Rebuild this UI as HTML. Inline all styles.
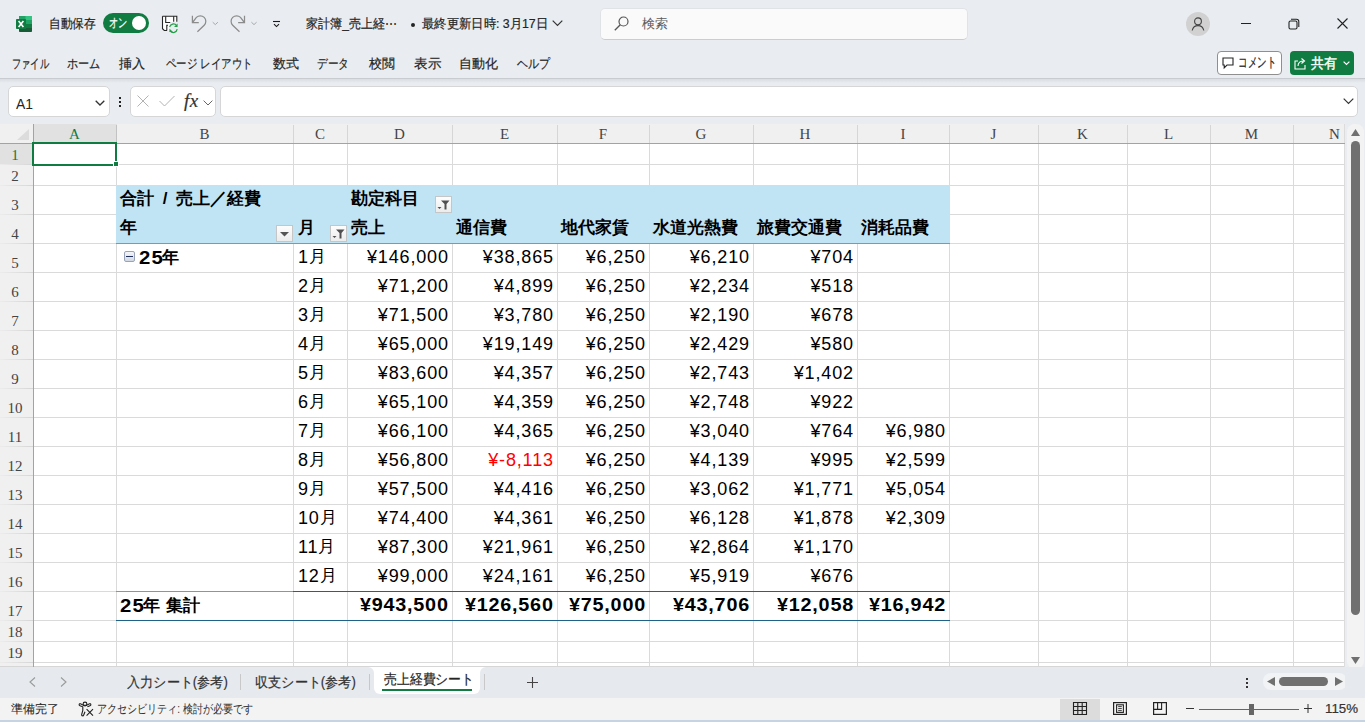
<!DOCTYPE html><html><head><meta charset="utf-8"><style>
*{margin:0;padding:0;box-sizing:border-box}
html,body{width:1365px;height:722px;overflow:hidden;background:#e9edf1;font-family:"Liberation Sans",sans-serif;color:#242424}
div{position:absolute}
.t{white-space:nowrap;line-height:16px;font-size:13px;-webkit-text-stroke:0.2px currentColor}
.c{white-space:nowrap;line-height:17px;font-size:17px;color:#000}
.r{text-align:right}
.b{font-weight:bold}
.n{letter-spacing:0.85px;font-size:18px}
.bn{font-size:18.5px;letter-spacing:1px;display:inline-block;transform:scaleX(1.1);transform-origin:0 0;margin-right:0.5px;position:relative;top:1px}
.bt{font-size:18px;letter-spacing:0.7px;transform:scaleX(1.1);transform-origin:100% 0}
.hd{white-space:nowrap;font-family:"Liberation Serif",serif;font-size:15px;line-height:15px;color:#4a4a4a}
svg{position:absolute;overflow:visible}
</style></head><body>
<svg style="left:16px;top:16px" width="16" height="16" viewBox="0 0 16 16">
<rect x="3" y="0" width="13" height="16" rx="0.8" fill="#185c37"/>
<rect x="3" y="0" width="13" height="12" fill="#107c41"/>
<rect x="3" y="0" width="13" height="8" fill="#21a366"/>
<rect x="3" y="0" width="13" height="4" fill="#21a366"/>
<rect x="9.5" y="0" width="6.5" height="4" fill="#33c481"/>
<rect x="0" y="3" width="10" height="10" rx="0.8" fill="#107c41"/>
<path d="M2.6 5 L7.4 11 M7.4 5 L2.6 11" stroke="#fff" stroke-width="1.6"/>
</svg>
<div id="x1" class="t" style="left:49px;top:16px;font-size:13px;color:#242424;transform:scaleX(0.9038);transform-origin:0 0;--tw:47">自動保存</div>
<div style="left:103px;top:13px;width:46px;height:20px;background:#107c41;border-radius:10px"></div>
<div id="x2" class="t" style="left:109px;top:15px;font-size:13px;color:#fff;transform:scaleX(0.7115);transform-origin:0 0;--tw:18.5">オン</div>
<div style="left:132px;top:16px;width:14px;height:14px;background:#fff;border-radius:7px"></div>
<svg style="left:158px;top:12px" width="26" height="24" viewBox="0 0 26 24">
<path d="M4.5 4.3 H18.8 V10 H12 V18.5 H6.5 L4.5 16.7 Z" fill="#fff"/>
<path d="M4.5 4.3 H18.8 V9.8 M4.5 4.3 V16.7 L6.3 18.5 H9" fill="none" stroke="#262626" stroke-width="1.1"/>
<path d="M7.7 4.3 V10.5 H12.2 M15.7 4.3 V9.8 M8.8 18.5 V13.3 H10" fill="none" stroke="#262626" stroke-width="1.1"/>
<path d="M11.6 15.2 A3.9 3.9 0 0 1 18.6 13.6 M19.2 17.2 A3.9 3.9 0 0 1 12.2 18.9" fill="none" stroke="#22a045" stroke-width="1.2"/>
<path d="M19.6 11.4 V15 H16 Z M11.4 16.4 V20 H15 Z" fill="#22a045"/>
</svg>
<svg style="left:186px;top:10px" width="76" height="26" viewBox="0 0 76 26">
<g fill="none" stroke="#8c8c8c" stroke-width="1.25">
<path d="M6.4 5.8 V12.5 H12.8"/>
<path d="M6.9 12 L10.4 7.4 A5.5 5.5 0 0 1 18.2 15.2 L11.4 21.8"/>
<path d="M58.5 5.8 V12.5 H52.1"/>
<path d="M58 12 L54.5 7.4 A5.5 5.5 0 0 0 46.7 15.2 L53.5 21.8"/>
</g>
<path d="M26.7 12.2 L29.3 14.6 L31.9 12.2 M65.4 12.2 L68 14.6 L70.6 12.2" fill="none" stroke="#a8a8a8" stroke-width="1"/>
</svg>
<svg style="left:272px;top:20px" width="9" height="8" viewBox="0 0 9 8"><path d="M1 1.5 H8" stroke="#1a1a1a" stroke-width="1.1"/><path d="M2 4.2 L4.5 6.6 L7 4.2" fill="none" stroke="#1a1a1a" stroke-width="1.1"/></svg>
<div id="x3" class="t" style="left:306px;top:16px;font-size:13px;color:#242424;transform:scaleX(0.9264);transform-origin:0 0;--tw:91">家計簿_売上経⋯</div>
<div style="left:411px;top:23px;width:4px;height:4px;background:#242424;border-radius:2px"></div>
<div id="x4" class="t" style="left:422px;top:16px;font-size:13px;color:#242424;transform:scaleX(0.9479);transform-origin:0 0;--tw:126">最終更新日時: 3月17日</div>
<svg style="left:552px;top:20px" width="11" height="7" viewBox="0 0 11 7"><path d="M0.7 0.7 L5.5 5.5 L10.3 0.7" fill="none" stroke="#333" stroke-width="1.2"/></svg>
<div style="left:600px;top:8px;width:368px;height:32px;background:#fafafa;border:1px solid #e0e3e6;border-bottom-color:#c9ccd0;border-radius:5px"></div>
<svg style="left:614px;top:16px" width="15" height="15" viewBox="0 0 15 15"><circle cx="9.5" cy="5.5" r="4.5" fill="none" stroke="#555" stroke-width="1.2"/><path d="M6.3 8.7 L0.8 14.2" stroke="#555" stroke-width="1.3"/></svg>
<div id="x5" class="t" style="left:642px;top:16px;font-size:13px;color:#5c5c5c;-webkit-text-stroke:0.05px;transform:scaleX(1.0000);transform-origin:0 0;--tw:26">検索</div>
<div style="left:1186px;top:12px;width:24px;height:24px;background:#d1d1d1;border-radius:12px"></div>
<svg style="left:1190px;top:16px" width="16" height="16" viewBox="0 0 16 16"><circle cx="8" cy="5.3" r="3.4" fill="none" stroke="#424242" stroke-width="1.1"/><path d="M2.2 14.5 C3 11 5.3 9.6 8 9.6 C10.7 9.6 13 11 13.8 14.5" fill="none" stroke="#424242" stroke-width="1.1"/></svg>
<div style="left:1241px;top:23px;width:10px;height:1px;background:#222"></div>
<svg style="left:1288px;top:18px" width="12" height="12" viewBox="0 0 12 12"><rect x="1" y="3" width="8" height="8" rx="1.5" fill="none" stroke="#222" stroke-width="1.1"/><path d="M3 1.2 H8.5 C9.8 1.2 10.8 2.2 10.8 3.5 V9" fill="none" stroke="#222" stroke-width="1.1"/></svg>
<svg style="left:1337px;top:18px" width="11" height="11" viewBox="0 0 11 11"><path d="M0.5 0.5 L10.5 10.5 M10.5 0.5 L0.5 10.5" stroke="#222" stroke-width="1.1"/></svg>
<div id="x6" class="t" style="left:12px;top:56px;font-size:13px;color:#242424;transform:scaleX(0.7115);transform-origin:0 0;--tw:37">ファイル</div>
<div id="x7" class="t" style="left:66.5px;top:56px;font-size:13px;color:#242424;transform:scaleX(0.8590);transform-origin:0 0;--tw:33.5">ホーム</div>
<div id="x8" class="t" style="left:119px;top:56px;font-size:13px;color:#242424;transform:scaleX(1.0000);transform-origin:0 0;--tw:26">挿入</div>
<div id="x9" class="t" style="left:165.5px;top:56px;font-size:13px;color:#242424;transform:scaleX(0.8037);transform-origin:0 0;--tw:86.5">ページ レイアウト</div>
<div id="x10" class="t" style="left:273px;top:56px;font-size:13px;color:#242424;transform:scaleX(1.0000);transform-origin:0 0;--tw:26">数式</div>
<div id="x11" class="t" style="left:317px;top:56px;font-size:13px;color:#242424;transform:scaleX(0.8205);transform-origin:0 0;--tw:32">データ</div>
<div id="x12" class="t" style="left:369px;top:56px;font-size:13px;color:#242424;transform:scaleX(1.0000);transform-origin:0 0;--tw:26">校閲</div>
<div id="x13" class="t" style="left:413.5px;top:56px;font-size:13px;color:#242424;transform:scaleX(1.0385);transform-origin:0 0;--tw:27">表示</div>
<div id="x14" class="t" style="left:459px;top:56px;font-size:13px;color:#242424;transform:scaleX(1.0000);transform-origin:0 0;--tw:39">自動化</div>
<div id="x15" class="t" style="left:516.5px;top:56px;font-size:13px;color:#242424;transform:scaleX(0.8462);transform-origin:0 0;--tw:33">ヘルプ</div>
<div style="left:1217px;top:51px;width:65px;height:24px;background:#fff;border:1px solid #8f8f8f;border-radius:4px"></div>
<svg style="left:1222px;top:57px" width="12" height="12" viewBox="0 0 12 12"><path d="M1 1 H11 V8 H5 L2.2 10.8 V8 H1 Z" fill="none" stroke="#242424" stroke-width="1.1"/></svg>
<div id="x16" class="t" style="left:1238px;top:54px;font-size:14px;color:#1a1a1a;transform:scaleX(0.6786);transform-origin:0 0;--tw:38">コメント</div>
<div style="left:1290px;top:51px;width:64px;height:24px;background:#107c41;border-radius:4px"></div>
<svg style="left:1294px;top:57px" width="13" height="13" viewBox="0 0 13 13"><path d="M4 4 H1 V12 H11 V8" fill="none" stroke="#fff" stroke-width="1.1"/><path d="M4 9 C4 5.5 6.5 4 9.5 4 M7.5 1.5 L10.5 4 L7.5 6.5" fill="none" stroke="#fff" stroke-width="1.1"/></svg>
<div id="x17" class="t" style="left:1311px;top:56px;font-size:13.5px;color:#fff;-webkit-text-stroke:0.4px #fff;transform:scaleX(0.9286);transform-origin:0 0;--tw:26">共有</div>
<svg style="left:1343px;top:61px" width="7" height="5" viewBox="0 0 7 5"><path d="M0.6 0.6 L3.5 3.5 L6.4 0.6" fill="none" stroke="#fff" stroke-width="1.2"/></svg>
<div style="left:0px;top:78px;width:1365px;height:1px;background:#c8ccd0"></div>
<div style="left:0px;top:79px;width:1365px;height:4px;background:linear-gradient(#dadee2,#e9edf1)"></div>
<div style="left:8px;top:86px;width:102px;height:31px;background:#fff;border:1px solid #d6d6d6;border-radius:5px"></div>
<div id="x18" class="t" style="left:16px;top:96px;font-size:15px;line-height:15px;color:#242424;-webkit-text-stroke:0;transform:scaleX(0.9260);transform-origin:0 0;--tw:17">A1</div>
<svg style="left:95px;top:100px" width="10" height="6" viewBox="0 0 10 6"><path d="M0.7 0.7 L5 5 L9.3 0.7" fill="none" stroke="#333" stroke-width="1.3"/></svg>
<div style="left:119px;top:97px;width:2px;height:2px;background:#222"></div>
<div style="left:119px;top:101px;width:2px;height:2px;background:#222"></div>
<div style="left:119px;top:105px;width:2px;height:2px;background:#222"></div>
<div style="left:130px;top:86px;width:86px;height:31px;background:#fff;border:1px solid #d6d6d6;border-radius:5px"></div>
<svg style="left:137px;top:95px" width="12" height="12" viewBox="0 0 12 12"><path d="M0.5 0.5 L11.5 11.5 M11.5 0.5 L0.5 11.5" stroke="#b3b3b3" stroke-width="1"/></svg>
<svg style="left:159px;top:95px" width="16" height="12" viewBox="0 0 16 12"><path d="M0.5 6 L5.5 11 L15.5 1" fill="none" stroke="#b3b3b3" stroke-width="1"/></svg>
<div id="x19" class="t" style="left:184px;top:92px;font-family:'Liberation Serif',serif;font-size:19px;line-height:18px;color:#333;letter-spacing:0.5px"><i>fx</i></div>
<svg style="left:203px;top:100px" width="10" height="6" viewBox="0 0 10 6"><path d="M0.6 0.6 L5 5 L9.4 0.6" fill="none" stroke="#666" stroke-width="1"/></svg>
<div style="left:220px;top:86px;width:1138px;height:31px;background:#fff;border:1px solid #d6d6d6;border-radius:5px"></div>
<svg style="left:1343px;top:98px" width="11" height="7" viewBox="0 0 11 7"><path d="M0.7 0.7 L5.5 5.5 L10.3 0.7" fill="none" stroke="#333" stroke-width="1.2"/></svg>
<div style="left:0px;top:124px;width:1344px;height:543px;background:#fff"></div>
<div style="left:0px;top:124px;width:1344px;height:19px;background:#f0f0f0"></div>
<div style="left:0px;top:143px;width:33px;height:524px;background:#f0f0f0"></div>
<div style="left:33px;top:124px;width:84px;height:19px;background:#e1e1e1"></div>
<div style="left:0px;top:143px;width:33px;height:21px;background:#e1e1e1"></div>
<svg style="left:17px;top:129px" width="12" height="11" viewBox="0 0 12 11"><path d="M12 0 V11 H0 Z" fill="#dcdcdc"/></svg>
<div style="left:116px;top:143px;width:1px;height:524px;background:#dadada"></div>
<div style="left:293px;top:143px;width:1px;height:524px;background:#dadada"></div>
<div style="left:347px;top:143px;width:1px;height:524px;background:#dadada"></div>
<div style="left:452px;top:143px;width:1px;height:524px;background:#dadada"></div>
<div style="left:557px;top:143px;width:1px;height:524px;background:#dadada"></div>
<div style="left:649px;top:143px;width:1px;height:524px;background:#dadada"></div>
<div style="left:753px;top:143px;width:1px;height:524px;background:#dadada"></div>
<div style="left:857px;top:143px;width:1px;height:524px;background:#dadada"></div>
<div style="left:949px;top:143px;width:1px;height:524px;background:#dadada"></div>
<div style="left:1038px;top:143px;width:1px;height:524px;background:#dadada"></div>
<div style="left:1127px;top:143px;width:1px;height:524px;background:#dadada"></div>
<div style="left:1210px;top:143px;width:1px;height:524px;background:#dadada"></div>
<div style="left:1293px;top:143px;width:1px;height:524px;background:#dadada"></div>
<div style="left:33px;top:164px;width:1312px;height:1px;background:#dadada"></div>
<div style="left:33px;top:185px;width:1312px;height:1px;background:#dadada"></div>
<div style="left:33px;top:214px;width:1312px;height:1px;background:#dadada"></div>
<div style="left:33px;top:243px;width:1312px;height:1px;background:#dadada"></div>
<div style="left:33px;top:272px;width:1312px;height:1px;background:#dadada"></div>
<div style="left:33px;top:301px;width:1312px;height:1px;background:#dadada"></div>
<div style="left:33px;top:330px;width:1312px;height:1px;background:#dadada"></div>
<div style="left:33px;top:359px;width:1312px;height:1px;background:#dadada"></div>
<div style="left:33px;top:388px;width:1312px;height:1px;background:#dadada"></div>
<div style="left:33px;top:417px;width:1312px;height:1px;background:#dadada"></div>
<div style="left:33px;top:446px;width:1312px;height:1px;background:#dadada"></div>
<div style="left:33px;top:475px;width:1312px;height:1px;background:#dadada"></div>
<div style="left:33px;top:504px;width:1312px;height:1px;background:#dadada"></div>
<div style="left:33px;top:533px;width:1312px;height:1px;background:#dadada"></div>
<div style="left:33px;top:562px;width:1312px;height:1px;background:#dadada"></div>
<div style="left:33px;top:591px;width:1312px;height:1px;background:#dadada"></div>
<div style="left:33px;top:620px;width:1312px;height:1px;background:#dadada"></div>
<div style="left:33px;top:641px;width:1312px;height:1px;background:#dadada"></div>
<div style="left:33px;top:662px;width:1312px;height:1px;background:#dadada"></div>
<div style="left:0px;top:666px;width:1345px;height:1px;background:#d6d6d6"></div>
<div style="left:1344px;top:124px;width:1px;height:543px;background:#dcdcdc"></div>
<div style="left:116px;top:125px;width:1px;height:18px;background:#c2c2c2"></div>
<div style="left:293px;top:125px;width:1px;height:18px;background:#d6d6d6"></div>
<div style="left:347px;top:125px;width:1px;height:18px;background:#d6d6d6"></div>
<div style="left:452px;top:125px;width:1px;height:18px;background:#d6d6d6"></div>
<div style="left:557px;top:125px;width:1px;height:18px;background:#d6d6d6"></div>
<div style="left:649px;top:125px;width:1px;height:18px;background:#d6d6d6"></div>
<div style="left:753px;top:125px;width:1px;height:18px;background:#d6d6d6"></div>
<div style="left:857px;top:125px;width:1px;height:18px;background:#d6d6d6"></div>
<div style="left:949px;top:125px;width:1px;height:18px;background:#d6d6d6"></div>
<div style="left:1038px;top:125px;width:1px;height:18px;background:#d6d6d6"></div>
<div style="left:1127px;top:125px;width:1px;height:18px;background:#d6d6d6"></div>
<div style="left:1210px;top:125px;width:1px;height:18px;background:#d6d6d6"></div>
<div style="left:1293px;top:125px;width:1px;height:18px;background:#d6d6d6"></div>
<div style="left:0px;top:164px;width:33px;height:1px;background:linear-gradient(to right,#ececec,#d6d6d6)"></div>
<div style="left:0px;top:185px;width:33px;height:1px;background:linear-gradient(to right,#ececec,#d6d6d6)"></div>
<div style="left:0px;top:214px;width:33px;height:1px;background:linear-gradient(to right,#ececec,#d6d6d6)"></div>
<div style="left:0px;top:243px;width:33px;height:1px;background:linear-gradient(to right,#ececec,#d6d6d6)"></div>
<div style="left:0px;top:272px;width:33px;height:1px;background:linear-gradient(to right,#ececec,#d6d6d6)"></div>
<div style="left:0px;top:301px;width:33px;height:1px;background:linear-gradient(to right,#ececec,#d6d6d6)"></div>
<div style="left:0px;top:330px;width:33px;height:1px;background:linear-gradient(to right,#ececec,#d6d6d6)"></div>
<div style="left:0px;top:359px;width:33px;height:1px;background:linear-gradient(to right,#ececec,#d6d6d6)"></div>
<div style="left:0px;top:388px;width:33px;height:1px;background:linear-gradient(to right,#ececec,#d6d6d6)"></div>
<div style="left:0px;top:417px;width:33px;height:1px;background:linear-gradient(to right,#ececec,#d6d6d6)"></div>
<div style="left:0px;top:446px;width:33px;height:1px;background:linear-gradient(to right,#ececec,#d6d6d6)"></div>
<div style="left:0px;top:475px;width:33px;height:1px;background:linear-gradient(to right,#ececec,#d6d6d6)"></div>
<div style="left:0px;top:504px;width:33px;height:1px;background:linear-gradient(to right,#ececec,#d6d6d6)"></div>
<div style="left:0px;top:533px;width:33px;height:1px;background:linear-gradient(to right,#ececec,#d6d6d6)"></div>
<div style="left:0px;top:562px;width:33px;height:1px;background:linear-gradient(to right,#ececec,#d6d6d6)"></div>
<div style="left:0px;top:591px;width:33px;height:1px;background:linear-gradient(to right,#ececec,#d6d6d6)"></div>
<div style="left:0px;top:620px;width:33px;height:1px;background:linear-gradient(to right,#ececec,#d6d6d6)"></div>
<div style="left:0px;top:641px;width:33px;height:1px;background:linear-gradient(to right,#ececec,#d6d6d6)"></div>
<div style="left:0px;top:662px;width:33px;height:1px;background:linear-gradient(to right,#ececec,#d6d6d6)"></div>
<div style="left:0px;top:143px;width:1345px;height:1px;background:#a3a3a3"></div>
<div style="left:33px;top:124px;width:1px;height:543px;background:#a3a3a3"></div>
<div class="hd" style="left:33px;top:127px;width:83px;text-align:center;color:#107c41">A</div>
<div class="hd" style="left:116px;top:127px;width:177px;text-align:center;color:#444">B</div>
<div class="hd" style="left:293px;top:127px;width:54px;text-align:center;color:#444">C</div>
<div class="hd" style="left:347px;top:127px;width:105px;text-align:center;color:#444">D</div>
<div class="hd" style="left:452px;top:127px;width:105px;text-align:center;color:#444">E</div>
<div class="hd" style="left:557px;top:127px;width:92px;text-align:center;color:#444">F</div>
<div class="hd" style="left:649px;top:127px;width:104px;text-align:center;color:#444">G</div>
<div class="hd" style="left:753px;top:127px;width:104px;text-align:center;color:#444">H</div>
<div class="hd" style="left:857px;top:127px;width:92px;text-align:center;color:#444">I</div>
<div class="hd" style="left:949px;top:127px;width:89px;text-align:center;color:#444">J</div>
<div class="hd" style="left:1038px;top:127px;width:89px;text-align:center;color:#444">K</div>
<div class="hd" style="left:1127px;top:127px;width:83px;text-align:center;color:#444">L</div>
<div class="hd" style="left:1210px;top:127px;width:83px;text-align:center;color:#444">M</div>
<div class="hd" style="left:1293px;top:127px;width:83px;text-align:center;color:#444">N</div>
<div class="hd" style="left:0px;top:148px;width:30px;text-align:center;color:#107c41">1</div>
<div class="hd" style="left:0px;top:169px;width:30px;text-align:center;color:#444">2</div>
<div class="hd" style="left:0px;top:198px;width:30px;text-align:center;color:#444">3</div>
<div class="hd" style="left:0px;top:227px;width:30px;text-align:center;color:#444">4</div>
<div class="hd" style="left:0px;top:256px;width:30px;text-align:center;color:#444">5</div>
<div class="hd" style="left:0px;top:285px;width:30px;text-align:center;color:#444">6</div>
<div class="hd" style="left:0px;top:314px;width:30px;text-align:center;color:#444">7</div>
<div class="hd" style="left:0px;top:343px;width:30px;text-align:center;color:#444">8</div>
<div class="hd" style="left:0px;top:372px;width:30px;text-align:center;color:#444">9</div>
<div class="hd" style="left:0px;top:401px;width:30px;text-align:center;color:#444">10</div>
<div class="hd" style="left:0px;top:430px;width:30px;text-align:center;color:#444">11</div>
<div class="hd" style="left:0px;top:459px;width:30px;text-align:center;color:#444">12</div>
<div class="hd" style="left:0px;top:488px;width:30px;text-align:center;color:#444">13</div>
<div class="hd" style="left:0px;top:517px;width:30px;text-align:center;color:#444">14</div>
<div class="hd" style="left:0px;top:546px;width:30px;text-align:center;color:#444">15</div>
<div class="hd" style="left:0px;top:575px;width:30px;text-align:center;color:#444">16</div>
<div class="hd" style="left:0px;top:604px;width:30px;text-align:center;color:#444">17</div>
<div class="hd" style="left:0px;top:625px;width:30px;text-align:center;color:#444">18</div>
<div class="hd" style="left:0px;top:646px;width:30px;text-align:center;color:#444">19</div>
<div style="left:116px;top:185px;width:834px;height:58px;background:#c1e4f5"></div>
<div style="left:116px;top:243px;width:834px;height:1px;background:#43ade0"></div>
<div style="left:116px;top:591px;width:177px;height:1px;background:#43ade0"></div>
<div style="left:293px;top:591px;width:657px;height:1px;background:#1f6287"></div>
<div style="left:116px;top:620px;width:834px;height:1px;background:#1f6287"></div>
<div style="left:276px;top:225px;width:17px;height:17px;background:linear-gradient(#fdfdfd,#ececec);border:1px solid #c6c6c6"></div>
<svg style="left:280px;top:232px" width="9" height="5" viewBox="0 0 9 5"><path d="M0 0 H9 L4.5 4.5Z" fill="#555"/></svg>
<div style="left:330px;top:225px;width:17px;height:17px;background:linear-gradient(#fdfdfd,#ececec);border:1px solid #c6c6c6"></div>
<svg style="left:332px;top:229px" width="13" height="10" viewBox="0 0 13 10"><path d="M4 0.5 H12.5 L9.5 4 V9.5 H7.5 V4 Z" fill="#505050"/><path d="M0.5 7 H4.5 L2.5 9Z" fill="#505050"/></svg>
<div style="left:435px;top:196px;width:17px;height:17px;background:linear-gradient(#fdfdfd,#ececec);border:1px solid #c6c6c6"></div>
<svg style="left:437px;top:200px" width="13" height="10" viewBox="0 0 13 10"><path d="M4 0.5 H12.5 L9.5 4 V9.5 H7.5 V4 Z" fill="#505050"/><path d="M0.5 7 H4.5 L2.5 9Z" fill="#505050"/></svg>
<div id="x20" class="c b" style="left:120px;top:190px;word-spacing:4px">合計 / 売上／経費</div>
<div id="x21" class="c b" style="left:120px;top:219px;">年</div>
<div id="x22" class="c b" style="left:298px;top:219px;">月</div>
<div id="x23" class="c b" style="left:351px;top:190px;">勘定科目</div>
<div id="x24" class="c b" style="left:351px;top:219px;">売上</div>
<div id="x25" class="c b" style="left:456px;top:219px;">通信費</div>
<div id="x26" class="c b" style="left:561px;top:219px;">地代家賃</div>
<div id="x27" class="c b" style="left:653px;top:219px;">水道光熱費</div>
<div id="x28" class="c b" style="left:757px;top:219px;">旅費交通費</div>
<div id="x29" class="c b" style="left:861px;top:219px;">消耗品費</div>
<div style="left:124px;top:251px;width:11px;height:11px;border:1px solid #9aa3b5;border-radius:2px;background:linear-gradient(#f4f6fa,#d3d9e4)"></div>
<div style="left:126px;top:256px;width:7px;height:1px;background:#1f2f5a"></div>
<div class="c b" style="left:139px;top:248px"><span class="bn">25</span>年</div>
<div class="c" style="left:298px;top:248px"><span class="n" style="position:relative;top:1px">1</span>月</div>
<div class="c n" style="right:916.15px;top:249px">¥146,000</div>
<div class="c n" style="right:811.15px;top:249px">¥38,865</div>
<div class="c n" style="right:719.15px;top:249px">¥6,250</div>
<div class="c n" style="right:615.15px;top:249px">¥6,210</div>
<div class="c n" style="right:511.15px;top:249px">¥704</div>
<div class="c" style="left:298px;top:277px"><span class="n" style="position:relative;top:1px">2</span>月</div>
<div class="c n" style="right:916.15px;top:278px">¥71,200</div>
<div class="c n" style="right:811.15px;top:278px">¥4,899</div>
<div class="c n" style="right:719.15px;top:278px">¥6,250</div>
<div class="c n" style="right:615.15px;top:278px">¥2,234</div>
<div class="c n" style="right:511.15px;top:278px">¥518</div>
<div class="c" style="left:298px;top:306px"><span class="n" style="position:relative;top:1px">3</span>月</div>
<div class="c n" style="right:916.15px;top:307px">¥71,500</div>
<div class="c n" style="right:811.15px;top:307px">¥3,780</div>
<div class="c n" style="right:719.15px;top:307px">¥6,250</div>
<div class="c n" style="right:615.15px;top:307px">¥2,190</div>
<div class="c n" style="right:511.15px;top:307px">¥678</div>
<div class="c" style="left:298px;top:335px"><span class="n" style="position:relative;top:1px">4</span>月</div>
<div class="c n" style="right:916.15px;top:336px">¥65,000</div>
<div class="c n" style="right:811.15px;top:336px">¥19,149</div>
<div class="c n" style="right:719.15px;top:336px">¥6,250</div>
<div class="c n" style="right:615.15px;top:336px">¥2,429</div>
<div class="c n" style="right:511.15px;top:336px">¥580</div>
<div class="c" style="left:298px;top:364px"><span class="n" style="position:relative;top:1px">5</span>月</div>
<div class="c n" style="right:916.15px;top:365px">¥83,600</div>
<div class="c n" style="right:811.15px;top:365px">¥4,357</div>
<div class="c n" style="right:719.15px;top:365px">¥6,250</div>
<div class="c n" style="right:615.15px;top:365px">¥2,743</div>
<div class="c n" style="right:511.15px;top:365px">¥1,402</div>
<div class="c" style="left:298px;top:393px"><span class="n" style="position:relative;top:1px">6</span>月</div>
<div class="c n" style="right:916.15px;top:394px">¥65,100</div>
<div class="c n" style="right:811.15px;top:394px">¥4,359</div>
<div class="c n" style="right:719.15px;top:394px">¥6,250</div>
<div class="c n" style="right:615.15px;top:394px">¥2,748</div>
<div class="c n" style="right:511.15px;top:394px">¥922</div>
<div class="c" style="left:298px;top:422px"><span class="n" style="position:relative;top:1px">7</span>月</div>
<div class="c n" style="right:916.15px;top:423px">¥66,100</div>
<div class="c n" style="right:811.15px;top:423px">¥4,365</div>
<div class="c n" style="right:719.15px;top:423px">¥6,250</div>
<div class="c n" style="right:615.15px;top:423px">¥3,040</div>
<div class="c n" style="right:511.15px;top:423px">¥764</div>
<div class="c n" style="right:419.15px;top:423px">¥6,980</div>
<div class="c" style="left:298px;top:451px"><span class="n" style="position:relative;top:1px">8</span>月</div>
<div class="c n" style="right:916.15px;top:452px">¥56,800</div>
<div class="c n" style="right:811.15px;top:452px;color:#f00">¥-8,113</div>
<div class="c n" style="right:719.15px;top:452px">¥6,250</div>
<div class="c n" style="right:615.15px;top:452px">¥4,139</div>
<div class="c n" style="right:511.15px;top:452px">¥995</div>
<div class="c n" style="right:419.15px;top:452px">¥2,599</div>
<div class="c" style="left:298px;top:480px"><span class="n" style="position:relative;top:1px">9</span>月</div>
<div class="c n" style="right:916.15px;top:481px">¥57,500</div>
<div class="c n" style="right:811.15px;top:481px">¥4,416</div>
<div class="c n" style="right:719.15px;top:481px">¥6,250</div>
<div class="c n" style="right:615.15px;top:481px">¥3,062</div>
<div class="c n" style="right:511.15px;top:481px">¥1,771</div>
<div class="c n" style="right:419.15px;top:481px">¥5,054</div>
<div class="c" style="left:298px;top:509px"><span class="n" style="position:relative;top:1px">10</span>月</div>
<div class="c n" style="right:916.15px;top:510px">¥74,400</div>
<div class="c n" style="right:811.15px;top:510px">¥4,361</div>
<div class="c n" style="right:719.15px;top:510px">¥6,250</div>
<div class="c n" style="right:615.15px;top:510px">¥6,128</div>
<div class="c n" style="right:511.15px;top:510px">¥1,878</div>
<div class="c n" style="right:419.15px;top:510px">¥2,309</div>
<div class="c" style="left:298px;top:538px"><span class="n" style="position:relative;top:1px">11</span>月</div>
<div class="c n" style="right:916.15px;top:539px">¥87,300</div>
<div class="c n" style="right:811.15px;top:539px">¥21,961</div>
<div class="c n" style="right:719.15px;top:539px">¥6,250</div>
<div class="c n" style="right:615.15px;top:539px">¥2,864</div>
<div class="c n" style="right:511.15px;top:539px">¥1,170</div>
<div class="c" style="left:298px;top:567px"><span class="n" style="position:relative;top:1px">12</span>月</div>
<div class="c n" style="right:916.15px;top:568px">¥99,000</div>
<div class="c n" style="right:811.15px;top:568px">¥24,161</div>
<div class="c n" style="right:719.15px;top:568px">¥6,250</div>
<div class="c n" style="right:615.15px;top:568px">¥5,919</div>
<div class="c n" style="right:511.15px;top:568px">¥676</div>
<div class="c b" style="left:120px;top:596px;word-spacing:1px"><span class="bn">25</span>年 集計</div>
<div class="c b bt" style="right:916.2px;top:597px">¥943,500</div>
<div class="c b bt" style="right:811.2px;top:597px">¥126,560</div>
<div class="c b bt" style="right:719.2px;top:597px">¥75,000</div>
<div class="c b bt" style="right:615.2px;top:597px">¥43,706</div>
<div class="c b bt" style="right:511.2px;top:597px">¥12,058</div>
<div class="c b bt" style="right:419.2px;top:597px">¥16,942</div>
<div style="left:32px;top:142px;width:85px;height:24px;border:2px solid #107c41"></div>
<div style="left:113px;top:161px;width:6px;height:6px;background:#107c41;border:1px solid #fff"></div>
<div style="left:1347px;top:124px;width:17px;height:545px;background:#f3f3f3;border-radius:8px"></div>
<svg style="left:1351px;top:129px" width="9" height="7" viewBox="0 0 9 7"><path d="M4.5 0 L9 7 H0Z" fill="#707070"/></svg>
<div style="left:1351px;top:141px;width:9px;height:474px;background:#707070;border-radius:5px"></div>
<svg style="left:1351px;top:657px" width="9" height="7" viewBox="0 0 9 7"><path d="M0 0 H9 L4.5 7Z" fill="#707070"/></svg>
<div style="left:0px;top:667px;width:1345px;height:31px;background:#e6eaee"></div>
<div style="left:368px;top:667px;width:118px;height:7px;background:#fff"></div>
<div style="left:0px;top:667px;width:374px;height:31px;background:#e6eaee;border-top-right-radius:6px"></div>
<div style="left:480px;top:667px;width:865px;height:31px;background:#e6eaee;border-top-left-radius:6px"></div>
<svg style="left:28px;top:677px" width="8" height="10" viewBox="0 0 8 10"><path d="M7 0.5 L2 5 L7 9.5" fill="none" stroke="#9a9a9a" stroke-width="1.1"/></svg>
<svg style="left:60px;top:677px" width="8" height="10" viewBox="0 0 8 10"><path d="M1 0.5 L6 5 L1 9.5" fill="none" stroke="#9a9a9a" stroke-width="1.1"/></svg>
<div id="x30" class="t" style="left:127px;top:674px;font-size:14px;color:#333;transform:scaleX(0.9410);transform-origin:0 0;--tw:101">入力シート(参考)</div>
<div style="left:240px;top:674px;width:1px;height:16px;background:#c8c8c8"></div>
<div id="x31" class="t" style="left:255px;top:674px;font-size:14px;color:#333;transform:scaleX(0.9410);transform-origin:0 0;--tw:101">収支シート(参考)</div>
<div style="left:369px;top:674px;width:1px;height:16px;background:#c8c8c8"></div>
<div style="left:374px;top:672px;width:106px;height:22px;background:#fff;border-radius:0 0 6px 6px"></div>
<div id="x32" class="t" style="left:384px;top:671px;font-size:14px;color:#242424;transform:scaleX(0.9184);transform-origin:0 0;--tw:90">売上経費シート</div>
<div style="left:382px;top:689px;width:90px;height:2px;background:#107c41"></div>
<div style="left:484px;top:674px;width:1px;height:16px;background:#c8c8c8"></div>
<svg style="left:527px;top:677px" width="11" height="11" viewBox="0 0 11 11"><path d="M5.5 0 V11 M0 5.5 H11" stroke="#444" stroke-width="1.1"/></svg>
<div style="left:1246px;top:678px;width:2px;height:2px;background:#333"></div>
<div style="left:1246px;top:682px;width:2px;height:2px;background:#333"></div>
<div style="left:1246px;top:686px;width:2px;height:2px;background:#333"></div>
<div style="left:1263px;top:673px;width:84px;height:17px;background:#f1f3f5;border-radius:8px"></div>
<svg style="left:1267px;top:677px" width="8" height="9" viewBox="0 0 8 9"><path d="M8 0 V9 L0 4.5Z" fill="#707070"/></svg>
<div style="left:1279px;top:677px;width:49px;height:9px;background:#707070;border-radius:5px"></div>
<svg style="left:1335px;top:677px" width="8" height="9" viewBox="0 0 8 9"><path d="M0 0 V9 L8 4.5Z" fill="#707070"/></svg>
<div style="left:1345px;top:667px;width:20px;height:31px;background:#e6eaee"></div>
<div style="left:0px;top:698px;width:1365px;height:24px;background:#f3f3f3"></div>
<div style="left:0px;top:720px;width:1365px;height:2px;background:#c5d3e3"></div>
<div id="x33" class="t" style="left:11px;top:701px;font-size:12px;color:#242424;-webkit-text-stroke:0.05px;transform:scaleX(1.0000);transform-origin:0 0;--tw:48">準備完了</div>
<svg style="left:74px;top:697px" width="26" height="23" viewBox="0 0 26 23"><g fill="none" stroke="#1f1f1f" stroke-width="1.1">
<circle cx="11" cy="7" r="1.9"/>
<path d="M6 8.7 C4.6 8.2 5 6.3 6.5 6.8 L9.3 8.2 H12.7 L15.5 6.8 C17 6.3 17.4 8.2 16 8.7 L13.4 9.8"/>
<path d="M6 8.7 L8.8 9.8 V13.5 L7.7 17.4 C7.3 19 9.4 19.4 9.7 18 L11 14.8"/>
<path d="M12.6 12.2 L19 18.6 M19 12.2 L12.6 18.6"/></g>
</svg>
<div id="x34" class="t" style="left:97px;top:701px;font-size:12px;color:#333;-webkit-text-stroke:0.05px;transform:scaleX(0.8357);transform-origin:0 0;--tw:156">アクセシビリティ: 検討が必要です</div>
<div style="left:1060px;top:699px;width:40px;height:21px;background:#dcdcdc"></div>
<svg style="left:1073px;top:702px" width="14" height="13" viewBox="0 0 14 13"><path d="M0.5 0.5 H13.5 V12.5 H0.5 Z M0.5 4.5 H13.5 M0.5 8.5 H13.5 M4.8 0.5 V12.5 M9.2 0.5 V12.5" fill="none" stroke="#222" stroke-width="1.1"/></svg>
<svg style="left:1113px;top:702px" width="14" height="13" viewBox="0 0 14 13"><rect x="0.6" y="0.6" width="12.8" height="11.8" fill="none" stroke="#222" stroke-width="1.2"/><rect x="3.6" y="2.8" width="6.8" height="7.6" fill="none" stroke="#222" stroke-width="1.1"/><path d="M5.2 4.6 H8.8 M5.2 6.6 H8.8 M5.2 8.6 H8.8" stroke="#222" stroke-width="0.9"/></svg>
<svg style="left:1153px;top:702px" width="14" height="13" viewBox="0 0 14 13"><rect x="0.6" y="0.6" width="12.8" height="11.8" fill="none" stroke="#222" stroke-width="1.2"/><path d="M0.6 7.4 H8.6 V0.6 M4.6 0.6 V7.4" fill="none" stroke="#222" stroke-width="1.1"/></svg>
<div style="left:1186px;top:708px;width:8px;height:1px;background:#333"></div>
<div style="left:1199px;top:709px;width:100px;height:1px;background:#666"></div>
<div style="left:1249px;top:704px;width:5px;height:11px;background:#666"></div>
<svg style="left:1304px;top:704px" width="8" height="9" viewBox="0 0 8 9"><path d="M4 0 V9 M0 4.5 H8" stroke="#333" stroke-width="1"/></svg>
<div id="x35" class="t" style="left:1325px;top:701px;font-size:13px;color:#333;transform:scaleX(1.0218);transform-origin:0 0;--tw:33">115%</div>
<script>
(function(){try{var els=document.querySelectorAll('div[id^=x]');for(var i=0;i<els.length;i++){var e=els[i];var tw=parseFloat(getComputedStyle(e).getPropertyValue('--tw'));if(!tw)continue;var old=e.style.transform;e.style.transform='none';var w=e.getBoundingClientRect().width;if(w>0){e.style.transform='scaleX('+(tw/w).toFixed(4)+')';}else{e.style.transform=old;}}}catch(err){}})();
</script>
</body></html>
